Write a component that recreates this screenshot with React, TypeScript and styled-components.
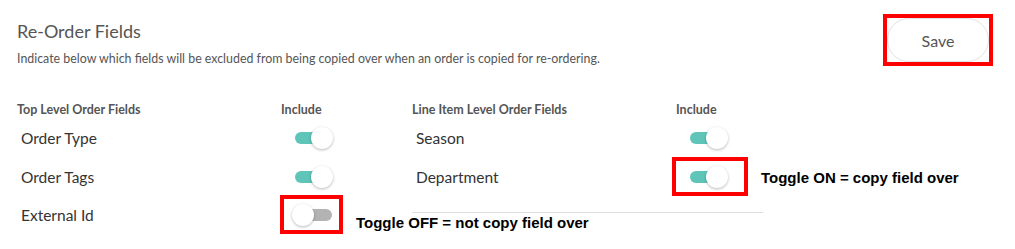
import React, { FC } from 'react';
import styled, { createGlobalStyle } from 'styled-components';

const GlobalStyle = createGlobalStyle`
  html, body {
    margin: 0;
    padding: 0;
    background: #fff;
  }
  body {
    font-family: Lato, 'Open Sans', sans-serif;
    -webkit-font-smoothing: antialiased;
  }
`;

/** Page */
const Page = styled.div`
  width: 1015px;
  height: 249px;
  box-sizing: border-box;
  padding: 14px 22px 0 17px;
  overflow: hidden;
`;

const Header = styled.header`
  display: flex;
  justify-content: space-between;
  align-items: flex-start;
`;

const Intro = styled.div`
  display: flex;
  flex-direction: column;
`;

const Title = styled.h1`
  margin: 6px 0 0;
  font-size: 18px;
  line-height: 22px;
  font-weight: 400;
  color: #555;
`;

const Description = styled.p`
  margin: 9px 0 0;
  font-size: 12.4px;
  line-height: 16px;
  color: #555;
`;

/** Save */
const SaveHighlight = styled.div`
  border: 4px solid #ff0000;
  display: flex;
`;

const SaveButton = styled.button`
  width: 102px;
  height: 44px;
  border: 1px solid #e2e2e2;
  border-radius: 22px;
  background: #fff;
  font-family: Lato, sans-serif;
  font-size: 16px;
  color: #555;
  cursor: pointer;
`;

/** Field groups */
const Columns = styled.div`
  display: grid;
  grid-template-columns: 395px 351px;
  align-items: start;
  margin-top: 32px;
`;

const FieldGroup = styled.section<{ $divider?: boolean }>`
  display: flex;
  flex-direction: column;
  padding-bottom: ${(p) => (p.$divider ? '16px' : '0')};
  border-bottom: ${(p) => (p.$divider ? '1px solid #ddd' : 'none')};
`;

const GroupHeader = styled.div`
  display: grid;
  grid-template-columns: 264px 1fr;
  height: 20px;
  align-items: center;
  font-size: 12.5px;
  font-weight: 700;
  color: #555;
`;

const FieldRow = styled.div`
  display: grid;
  grid-template-columns: 264px 1fr;
  height: 38.5px;
  align-items: center;
`;

const FieldLabel = styled.span`
  padding-left: 4px;
  font-size: 15.5px;
  color: #333;
`;

const ToggleCell = styled.div`
  display: flex;
  align-items: center;
  padding-left: 11px;
`;

/** Toggle */
const Switch = styled.span<{ $on: boolean }>`
  position: relative;
  display: inline-block;
  width: 41px;
  height: 22px;
  flex-shrink: 0;

  &::before {
    content: '';
    position: absolute;
    left: 3px;
    right: 1px;
    top: 5px;
    height: 12px;
    border-radius: 6px;
    background: ${(p) => (p.$on ? '#5ec5b8' : '#b3b3b3')};
  }

  &::after {
    content: '';
    position: absolute;
    top: 0;
    left: ${(p) => (p.$on ? '19px' : '0')};
    width: 22px;
    height: 22px;
    border-radius: 50%;
    background: #fff;
    box-shadow: 0 1px 3px rgba(0, 0, 0, 0.28);
  }
`;

/** Annotation overlays */
const Highlight = styled.span<{ $l: number; $r: number; $t: number; $b: number }>`
  position: relative;
  display: inline-flex;

  &::after {
    content: '';
    position: absolute;
    left: ${(p) => -p.$l}px;
    right: ${(p) => -p.$r}px;
    top: ${(p) => -p.$t}px;
    bottom: ${(p) => -p.$b}px;
    border: 4px solid #ff0000;
    pointer-events: none;
  }
`;

const Callout = styled.span<{ $gap: number; $shift: number }>`
  position: absolute;
  left: calc(100% + ${(p) => p.$gap}px);
  top: 50%;
  transform: translateY(calc(-50% + ${(p) => p.$shift}px));
  white-space: nowrap;
  font-family: 'Liberation Sans', Arial, sans-serif;
  font-weight: 700;
  font-size: 15px;
  color: #000;
`;

interface Field {
  label: string;
  on: boolean;
  note?: string;
}

const Toggle: FC<{ field: Field }> = ({ field }) => {
  const sw = <Switch $on={field.on} />;
  if (!field.note) return sw;
  const box = field.on
    ? { $l: 15, $r: 20, $t: 9, $b: 8 }
    : { $l: 12, $r: 10, $t: 9, $b: 8 };
  return (
    <Highlight {...box}>
      {sw}
      <Callout $gap={box.$r + 13} $shift={field.on ? 0 : 7}>
        {field.note}
      </Callout>
    </Highlight>
  );
};

const Group: FC<{ title: string; fields: Field[]; divider?: boolean }> = ({ title, fields, divider }) => (
  <FieldGroup $divider={divider}>
    <GroupHeader>
      <span>{title}</span>
      <span>Include</span>
    </GroupHeader>
    {fields.map((f) => (
      <FieldRow key={f.label}>
        <FieldLabel>{f.label}</FieldLabel>
        <ToggleCell>
          <Toggle field={f} />
        </ToggleCell>
      </FieldRow>
    ))}
  </FieldGroup>
);

const topLevel: Field[] = [
  { label: 'Order Type', on: true },
  { label: 'Order Tags', on: true },
  { label: 'External Id', on: false, note: 'Toggle OFF = not copy field over' },
];

const lineItem: Field[] = [
  { label: 'Season', on: true },
  { label: 'Department', on: true, note: 'Toggle ON = copy field over' },
];

const App: FC = () => (
  <>
    <GlobalStyle />
    <Page>
      <Header>
        <Intro>
          <Title>Re-Order Fields</Title>
          <Description>
            Indicate below which fields will be excluded from being copied over when an order is copied for
            re-ordering.
          </Description>
        </Intro>
        <SaveHighlight>
          <SaveButton>Save</SaveButton>
        </SaveHighlight>
      </Header>
      <Columns>
        <Group title="Top Level Order Fields" fields={topLevel} />
        <Group title="Line Item Level Order Fields" fields={lineItem} divider />
      </Columns>
    </Page>
  </>
);

export default App;
